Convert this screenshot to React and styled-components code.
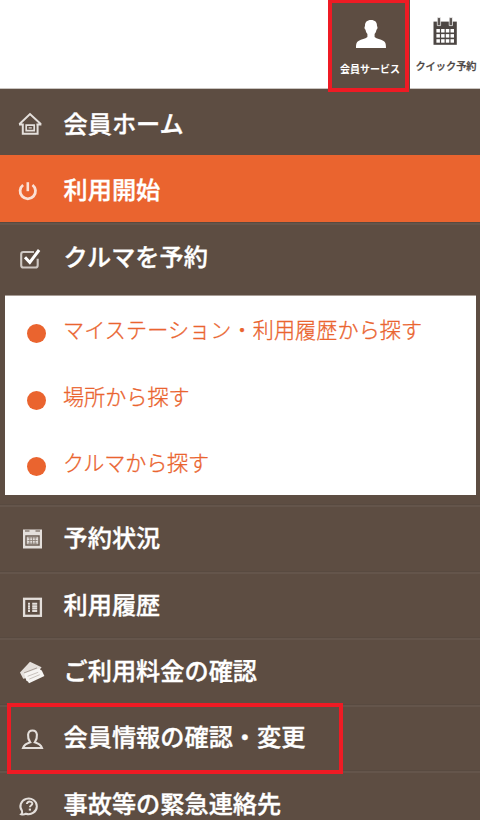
import React from "react";
import styled, { createGlobalStyle } from "styled-components";

const brown = "#5d4d42";
const orange = "#ea642f";
const red = "#ee1b24";
const pale = "#e4dfdb";

const GlobalStyle = createGlobalStyle`
  html, body { margin: 0; padding: 0; background: ${brown}; }
  body { font-family: "Noto Sans CJK JP", sans-serif; overflow: hidden; }
`;

const Screen = styled.div`
  width: 480px;
  height: 820px;
  overflow: hidden;
  background: ${brown};
`;

const Header = styled.header`
  box-sizing: border-box;
  height: 89px;
  display: flex;
  justify-content: flex-end;
  background: #fff;
  border-bottom: 1px solid #c9c4c0;
`;

const HeaderTab = styled.div`
  position: relative;
  box-sizing: border-box;
  width: ${(p) => (p.$active ? 82 : 70)}px;
  height: ${(p) => (p.$active ? 89 : 88)}px;
  padding-top: ${(p) => (p.$active ? 17 : 15)}px;
  padding-left: ${(p) => (p.$active ? 3 : 0)}px;
  display: flex;
  flex-direction: column;
  align-items: center;
  gap: ${(p) => (p.$active ? 10 : 9)}px;
  color: ${(p) => (p.$active ? "#fff" : "#4a4442")};
  background: ${(p) => (p.$active ? brown : "#fff")};
`;

const HeaderLabel = styled.span`
  font-size: ${(p) => p.$size}px;
  line-height: 20px;
  font-weight: ${(p) => p.$weight};
  -webkit-text-stroke: ${(p) => (p.$weight < 700 ? 0.3 : 0)}px currentColor;
  white-space: nowrap;
  margin-left: ${(p) => p.$shift || 0}px;
`;

const TabFrame = styled.span`
  position: absolute;
  inset: 0 1px -3px 0;
  border: 4px solid ${red};
  border-top-width: 3px;
  z-index: 1;
`;

const Menu = styled.nav`
  display: flex;
  flex-direction: column;
`;

const Row = styled.div`
  position: relative;
  box-sizing: border-box;
  flex: none;
  height: ${(p) => p.$height}px;
  display: flex;
  align-items: flex-start;
  background: ${(p) => (p.$active ? orange : brown)};
  box-shadow: ${(p) =>
    p.$line ? "inset 0 1px #584a40, inset 0 3px #64554b" : "none"};
`;

const RowLabel = styled.span`
  margin-top: ${(p) => p.$top || 16}px;
  color: #fff;
  font-size: 24.2px;
  line-height: 34px;
  font-weight: 500;
  -webkit-text-stroke: 0.35px #fff;
  white-space: nowrap;
`;

const RowIcon = styled.svg`
  flex: none;
  width: 63.5px;
  height: 66px;
  overflow: visible;
`;

const RowFrame = styled.span`
  position: absolute;
  left: 7px;
  top: -1px;
  width: 328px;
  height: 63px;
  border: 4px solid ${red};
  z-index: 1;
`;

const SubMenu = styled.ul`
  box-sizing: border-box;
  flex: none;
  list-style: none;
  margin: 0 4px 9px 5px;
  padding: 1px 0 0 22px;
  height: 200px;
  background: #fff;
  box-shadow: inset 0 1px #a89d96;
`;

const SubItem = styled.li`
  height: 66.5px;
  display: flex;
  gap: 17px;
  color: ${orange};
  font-size: 21.1px;
  letter-spacing: ${(p) => p.$spacing || 0}px;
  font-weight: 300;
  -webkit-text-stroke: 0.3px ${orange};
  line-height: 67px;
  white-space: nowrap;
`;

const Dot = styled.span`
  width: 19px;
  height: 19px;
  margin-top: 28px;
  border-radius: 50%;
  background: ${orange};
`;

function Icon({ children, top = 0 }) {
  return (
    <RowIcon viewBox={`0 ${-top} 63.5 66`} fill="none" stroke={pale} strokeWidth="1.7">
      {children}
    </RowIcon>
  );
}

const HomeIcon = () => (
  <Icon>
    <path d="M19.3 35.2 30 25l11 10.2M19 35.6h4.8M36.4 35.6h5M22.8 34.5v10.2h14.8V34.5" strokeWidth="2" />
    <path d="M26.2 36.2h8v5.4h-8z" strokeWidth="1.7" />
    <path d="M28.6 38.9h3.2" strokeWidth="1.2" />
  </Icon>
);

const PowerIcon = () => (
  <Icon>
    <path d="M23.1 30a7.7 7.7 0 1 0 9.4 0" strokeWidth="2.8" stroke="#fbe0d5" />
    <path d="M27.8 27.2v9" strokeWidth="2.6" stroke="#fbe0d5" />
  </Icon>
);

const CheckIcon = () => (
  <Icon>
    <path d="M34 30H23.4q-2.2 0-2.2 2.2v11q0 2.3 2.2 2.3h12q2.3 0 2.3-2.3v-6.5" strokeWidth="2.1" stroke="#cfc8c3" />
    <path d="m25 35.3 4.8 5.2 9.3-12.5" stroke="#fff" strokeWidth="3" />
  </Icon>
);

const CalendarIcon = () => (
  <Icon top={1}>
    <path d="M23 24.5h19v19H23z" fill={pale} stroke="none" />
    <path d="M25 24.5h4.5v2.5H25zM35.5 24.5H40v2.5h-4.5z" fill="#a0968e" stroke="none" />
    <path d="M26 31h13v9H26z" strokeWidth="1.5" stroke="#6b5d53" />
    <path d="M27.5 32.8h10M27.5 35.5h10M27.5 38.2h10M29.8 32v7.5M32.5 32v7.5M35.2 32v7.5" strokeWidth=".8" stroke="#887b72" />
  </Icon>
);

const HistoryIcon = () => (
  <Icon top={1}>
    <rect x="24.1" y="26.8" width="16.8" height="17" strokeWidth="2.3" />
    <path d="M28 31.8h2M28 34.2h2M28 36.6h2M28 39h2M32.2 31.8h5M32.2 34.2h5M32.2 36.6h5M32.2 39h5" strokeWidth="2" />
  </Icon>
);

const CardsIcon = () => (
  <Icon top={1}>
    <path d="M20 34.6 30 23.8l11.6 5.4-7 9.4-11.4 2.2z" fill={pale} stroke="none" />
    <path d="m24 35.4 15.4-5.2q.8 2 2.4 2.2l2.6 5.6-15.4 7.2q-.8-2-2.6-2.4z" fill="#f6f4f2" stroke="none" />
    <path d="m24 34.9 13-5" strokeWidth=".9" stroke="#a0958d" />
    <path d="m27.6 38.3 10.6-4M29.3 41.1l10.4-4.4" strokeWidth=".8" stroke="#bdb5af" />
  </Icon>
);

const MemberIcon = () => (
  <Icon top={1}>
    <path
      d="M30.2 37.3c-1.8-2.6-2.4-5.1-2.1-7.6.3-2.8 1.7-4.2 4.4-4.2s4.1 1.4 4.4 4.2c.3 2.5-.3 5-2.1 7.6 3.2 1 6 2.3 7.2 5.7H23c1.2-3.4 4-4.7 7.2-5.7Z"
      strokeWidth="2.1"
    />
  </Icon>
);

const HelpIcon = () => (
  <Icon top={1}>
    <path d="M21.2 43.2c1-.9 1.2-2.1.8-3.3a8.2 7.8 0 1 1 4 2.8c-1.6.8-3.2 1-4.8.5Z" strokeWidth="2" />
    <path d="M26.9 33c.2-3.6 6.3-2.8 5.3.2-.5 1.3-2.3 1.4-2.3 3" strokeWidth="2" />
    <path d="M28.8 37.6H31v2h-2.2z" fill={pale} stroke="none" />
  </Icon>
);

const PersonIcon = () => (
  <svg width="30" height="32" viewBox="0 0 30 32" fill="#fff">
    <path d="M15 3c4 0 6.2 2.2 6 6.2.8.3.7 3.1-.5 3.6-.4 2.1-1.2 3.5-1.9 4.3v3c2.1 2 6.2 2.3 8.5 3.6 2.4 1.2 2.9 3.2 2.9 7.3H0c0-4.1.5-6.1 2.9-7.3 2.3-1.3 6.4-1.6 8.5-3.6v-3c-.7-.8-1.5-2.2-1.9-4.3-1.2-.5-1.3-3.3-.5-3.6C8.8 5.2 11 3 15 3Z" />
  </svg>
);

const columns = [3.4, 8.1, 12.8, 17.5];
const lines = [14, 19.1, 24.2];

const QuickCalendarIcon = () => (
  <svg width="24" height="32" viewBox="0 0 24 32">
    <path d="M.5 6.6h23.3v23.2H.5z" fill="#4c4643" />
    {lines.map((y) =>
      columns.map((x) => (
        <path key={`${x}-${y}`} d={`M${x} ${y}h3.5v3.5h-3.5z`} fill="#fff" />
      ))
    )}
    <path d="M4.3 2.6h3.3v8H4.3zM16.2 2.6h3.3v8h-3.3z" fill="#5b5552" stroke="#fff" strokeWidth=".7" />
  </svg>
);

const mainItems = [
  { label: "予約状況", icon: CalendarIcon, height: 67, top: 16 },
  { label: "利用履歴", icon: HistoryIcon, height: 66, top: 16 },
  { label: "ご利用料金の確認", icon: CardsIcon, height: 67, top: 16 },
  { label: "会員情報の確認・変更", icon: MemberIcon, height: 66, top: 15, framed: true },
  { label: "事故等の緊急連絡先", icon: HelpIcon, height: 67, top: 16 },
];

const subItems = [
  { label: "マイステーション・利用履歴から探す", spacing: 0.1 },
  { label: "場所から探す" },
  { label: "クルマから探す", spacing: -0.15 },
];

export default function App() {
  return (
    <Screen>
      <GlobalStyle />
      <Header>
        <HeaderTab $active>
          <PersonIcon />
          <HeaderLabel $size={10} $weight={700} $shift={-1}>会員サービス</HeaderLabel>
          <TabFrame />
        </HeaderTab>
        <HeaderTab>
          <QuickCalendarIcon />
          <HeaderLabel $size={10.2} $weight={500} $shift={2}>クイック予約</HeaderLabel>
        </HeaderTab>
      </Header>
      <Menu>
        <Row $height={66}>
          <HomeIcon />
          <RowLabel $top={17}>会員ホーム</RowLabel>
        </Row>
        <Row $height={67} $active>
          <PowerIcon />
          <RowLabel $top={17}>利用開始</RowLabel>
        </Row>
        <Row $height={73} $line>
          <CheckIcon />
          <RowLabel $top={17}>クルマを予約</RowLabel>
        </Row>
        <SubMenu>
          {subItems.map(({ label, spacing }) => (
            <SubItem key={label} $spacing={spacing}>
              <Dot />
              {label}
            </SubItem>
          ))}
        </SubMenu>
        {mainItems.map(({ label, icon: ItemIcon, height, framed, top }) => (
          <Row key={label} $height={height} $line>
            <ItemIcon />
            <RowLabel $top={top}>{label}</RowLabel>
            {framed && <RowFrame />}
          </Row>
        ))}
      </Menu>
    </Screen>
  );
}
